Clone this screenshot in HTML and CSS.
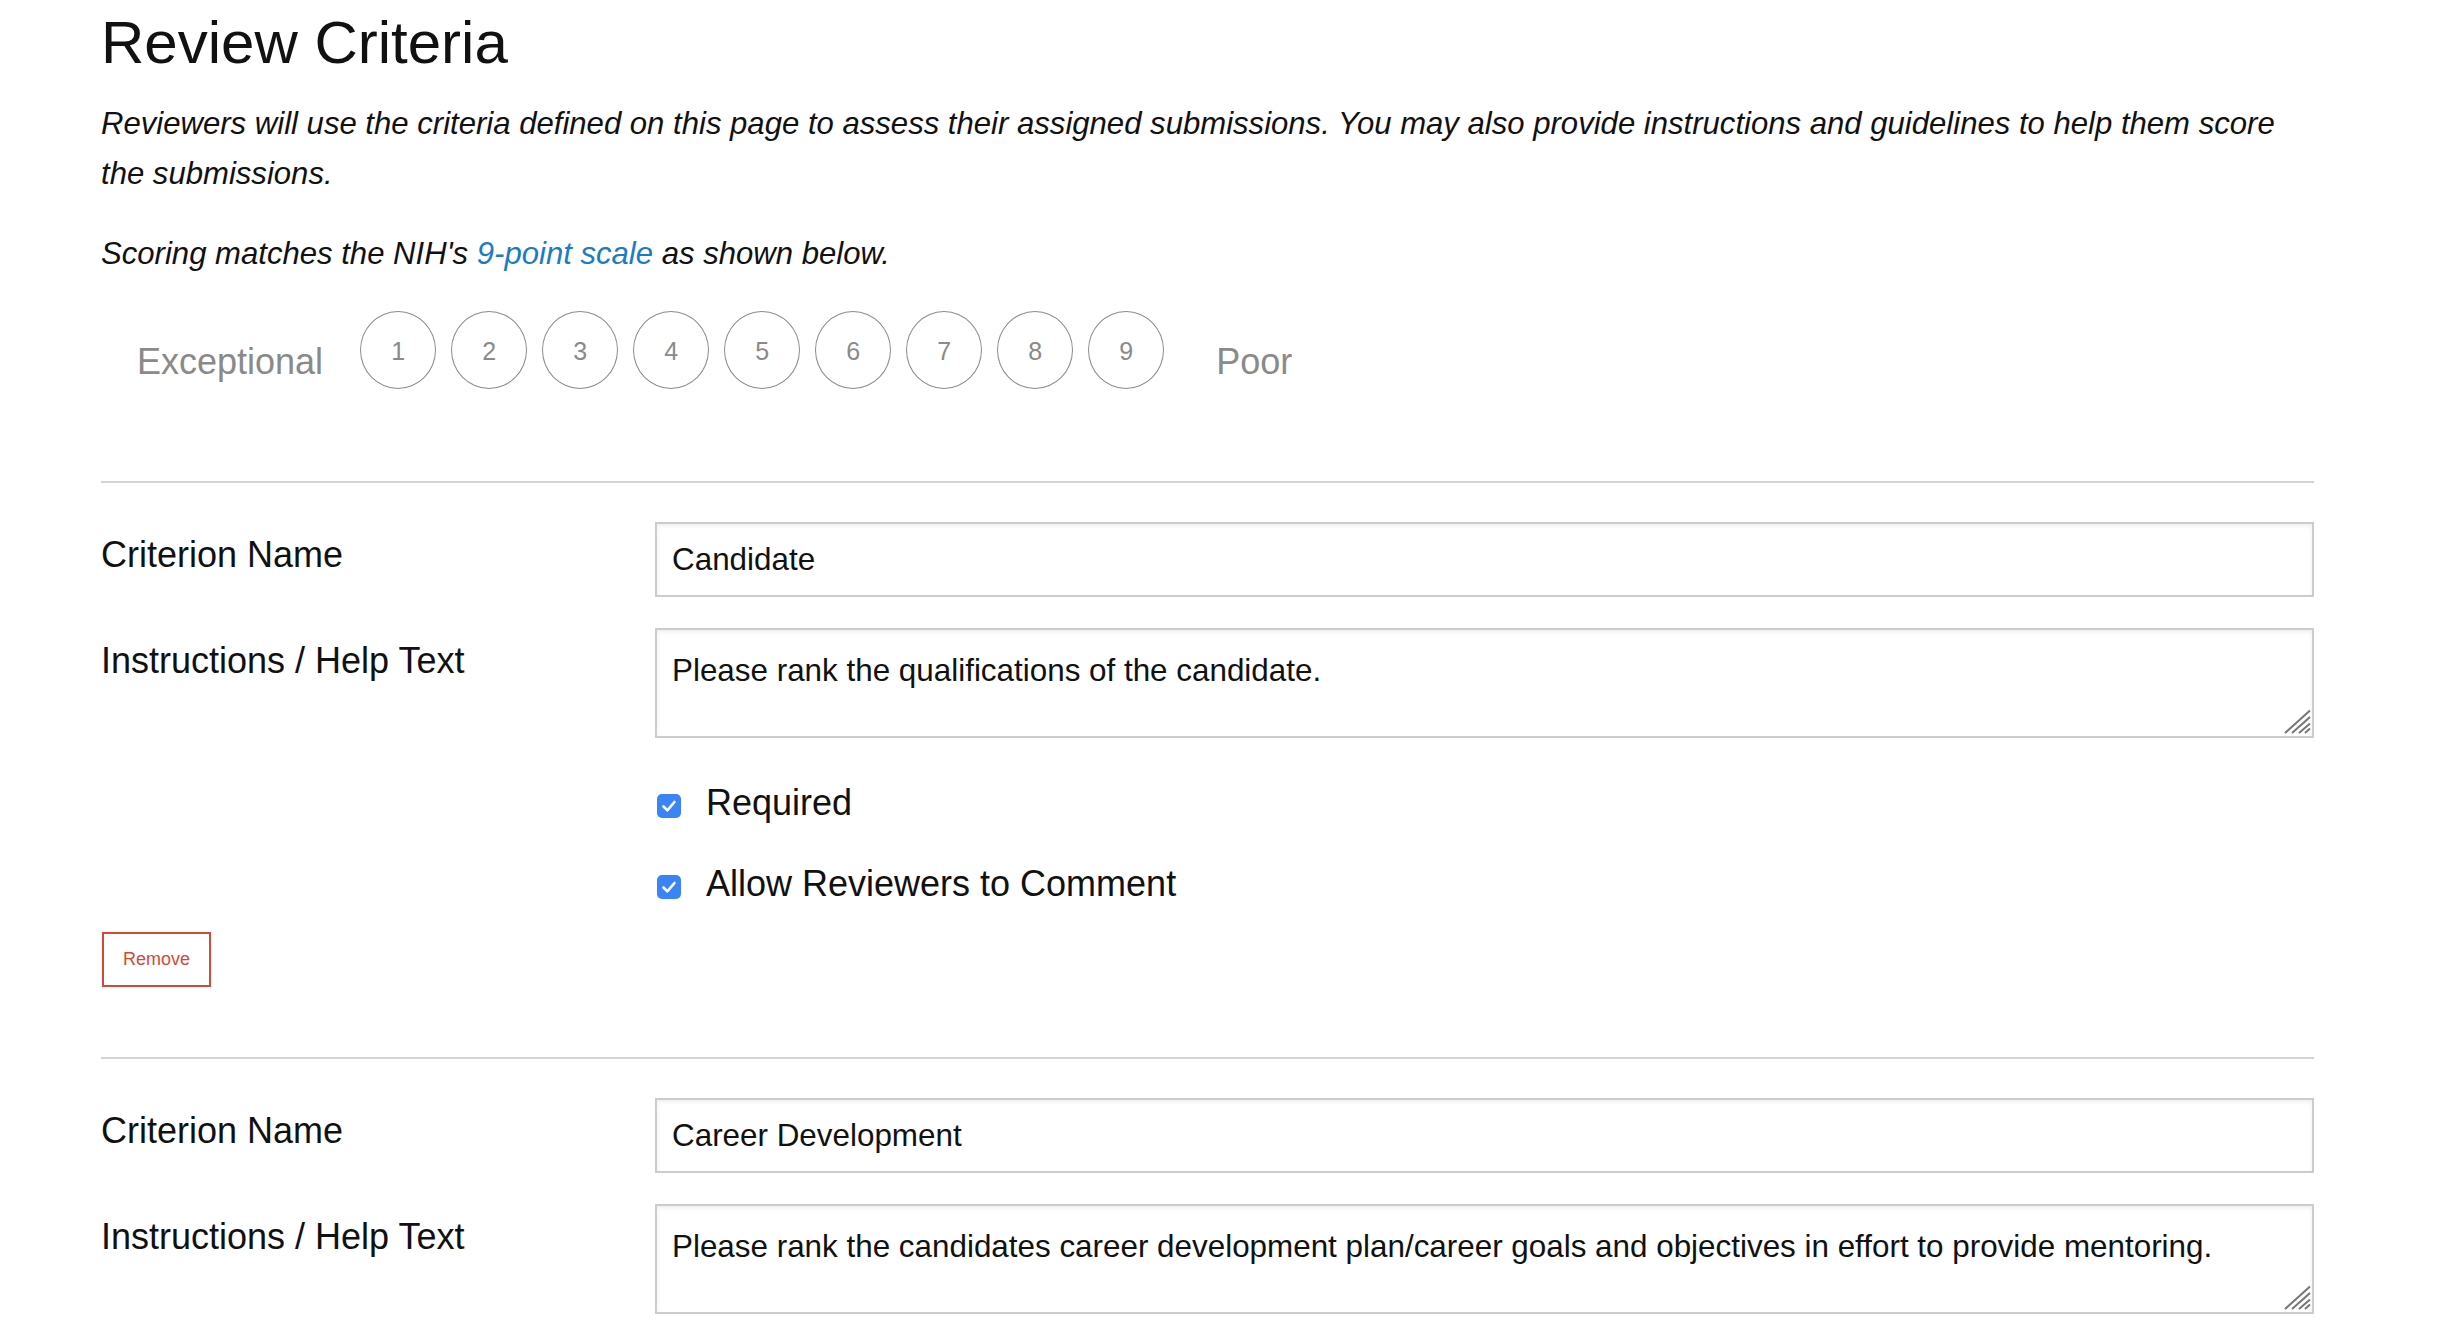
FILE: index.html
```html
<!DOCTYPE html>
<html lang="en">
<head>
<meta charset="utf-8">
<title>Review Criteria</title>
<link rel="stylesheet" href="styles.css">
</head>
<body>
<main class="page">
  <h1 class="title">Review Criteria</h1>
  <p class="intro">Reviewers will use the criteria defined on this page to assess their assigned submissions. You may also provide instructions and guidelines to help them score the submissions.</p>
  <p class="intro intro-scoring">Scoring matches the NIH's <a class="link" href="#">9-point scale</a> as shown below.</p>

  <div class="scale">
    <span class="scale-label scale-label-start">Exceptional</span>
    <div class="circles">
      <span class="circle">1</span>
      <span class="circle">2</span>
      <span class="circle">3</span>
      <span class="circle">4</span>
      <span class="circle">5</span>
      <span class="circle">6</span>
      <span class="circle">7</span>
      <span class="circle">8</span>
      <span class="circle">9</span>
    </div>
    <span class="scale-label scale-label-end">Poor</span>
  </div>

  <section class="criterion">
    <div class="field-row">
      <label class="field-label">Criterion Name</label>
      <input class="text-input" type="text" value="Candidate">
    </div>
    <div class="field-row">
      <label class="field-label">Instructions / Help Text</label>
      <div class="area-wrap">
        <textarea class="text-area">Please rank the qualifications of the candidate.</textarea>
        <svg class="grip" viewBox="0 0 27 25" width="27" height="25"><path d="M1 24 L26 1.5 M8 24 L26 8 M15 24 L26 14.5 M21 24 L26 19.5" stroke="#767676" stroke-width="2" fill="none"/></svg>
      </div>
    </div>
    <div class="checks">
      <div class="check">
        <span class="checkbox"><svg viewBox="0 0 24 24" width="24" height="24"><path d="M6.5 12.5 L10.3 16.3 L17.5 8" fill="none" stroke="#fff" stroke-width="2.6" stroke-linecap="round" stroke-linejoin="round"/></svg></span>
        <span class="check-text">Required</span>
      </div>
      <div class="check">
        <span class="checkbox"><svg viewBox="0 0 24 24" width="24" height="24"><path d="M6.5 12.5 L10.3 16.3 L17.5 8" fill="none" stroke="#fff" stroke-width="2.6" stroke-linecap="round" stroke-linejoin="round"/></svg></span>
        <span class="check-text">Allow Reviewers to Comment</span>
      </div>
    </div>
    <button class="remove" type="button">Remove</button>
  </section>

  <section class="criterion">
    <div class="field-row">
      <label class="field-label">Criterion Name</label>
      <input class="text-input" type="text" value="Career Development">
    </div>
    <div class="field-row">
      <label class="field-label">Instructions / Help Text</label>
      <div class="area-wrap">
        <textarea class="text-area">Please rank the candidates career development plan/career goals and objectives in effort to provide mentoring.</textarea>
        <svg class="grip" viewBox="0 0 27 25" width="27" height="25"><path d="M1 24 L26 1.5 M8 24 L26 8 M15 24 L26 14.5 M21 24 L26 19.5" stroke="#767676" stroke-width="2" fill="none"/></svg>
      </div>
    </div>
  </section>
</main>
</body>
</html>
```

FILE: styles.css
```css
html, body {
  margin: 0;
  padding: 0;
  background: #ffffff;
}

body {
  font-family: "Liberation Sans", Arial, Helvetica, sans-serif;
  color: #111111;
}

.page {
  width: 2213px;
  margin-left: 101px;
}

.title {
  margin: 8px 0 0;
  font-size: 60px;
  line-height: 70px;
  font-weight: normal;
  color: #111111;
}

.intro {
  margin: 21px 0 0;
  font-size: 31.1px;
  line-height: 50px;
  font-style: italic;
}

.intro-scoring {
  margin-top: 30px;
}

.link {
  color: #1b7cc4;
  text-decoration: none;
}

.scale {
  display: flex;
  align-items: flex-start;
  margin-top: 32px;
}

.scale-label {
  font-size: 36px;
  line-height: 41px;
  color: #8a8a8a;
  margin-top: 30px;
}

.scale-label-start {
  margin-left: 36px;
  margin-right: 37px;
}

.scale-label-end {
  margin-left: 52px;
}

.circles {
  display: flex;
  gap: 15px;
}

.circle {
  box-sizing: border-box;
  width: 76px;
  height: 78px;
  border: 1.5px solid #8c8c8c;
  border-radius: 50%;
  display: flex;
  align-items: center;
  justify-content: center;
  padding-top: 3px;
  font-size: 25px;
  color: #8a8a8a;
}

.criterion {
  margin-top: 92px;
  border-top: 2px solid #d4d4d4;
  padding: 39px 0 70px;
}

.criterion + .criterion {
  margin-top: 0;
}

.field-row {
  display: grid;
  grid-template-columns: 554px 1fr;
}

.field-row + .field-row {
  margin-top: 31px;
}

.field-label {
  font-size: 36px;
  line-height: 41px;
  padding-top: 12px;
  color: #111111;
}

.text-input,
.text-area {
  box-sizing: border-box;
  width: 100%;
  margin: 0;
  border: 2px solid #cccccc;
  border-radius: 0;
  box-shadow: inset 0 2px 4px rgba(0, 0, 0, 0.07);
  background: #ffffff;
  font-family: "Liberation Sans", Arial, Helvetica, sans-serif;
  font-size: 31.4px;
  color: #111111;
  outline: none;
}

.text-input {
  height: 75px;
  padding: 0 15px;
}

.area-wrap {
  position: relative;
}

.text-area {
  display: block;
  height: 110px;
  padding: 17px 15px;
  line-height: 48px;
  resize: none;
}

.grip {
  position: absolute;
  right: 3px;
  bottom: 4px;
  display: block;
}

.checks {
  margin: 44px 0 0 554px;
  display: flex;
  flex-direction: column;
  gap: 40px;
}

.check {
  display: flex;
  align-items: center;
  gap: 25px;
  font-size: 36px;
  line-height: 41px;
}

.checkbox {
  box-sizing: border-box;
  width: 24px;
  height: 24px;
  margin-left: 2px;
  margin-top: 7px;
  border-radius: 5px;
  background: #3b84f5;
  display: flex;
  align-items: center;
  justify-content: center;
}

.checkbox svg {
  display: block;
}

.remove {
  display: block;
  box-sizing: border-box;
  margin-top: 28px;
  margin-left: 1px;
  width: 109px;
  height: 55px;
  border: 2px solid #d24a36;
  border-radius: 0;
  background: #ffffff;
  color: #d24a36;
  font-family: "Liberation Sans", Arial, Helvetica, sans-serif;
  font-size: 18px;
  padding: 0;
}
```
